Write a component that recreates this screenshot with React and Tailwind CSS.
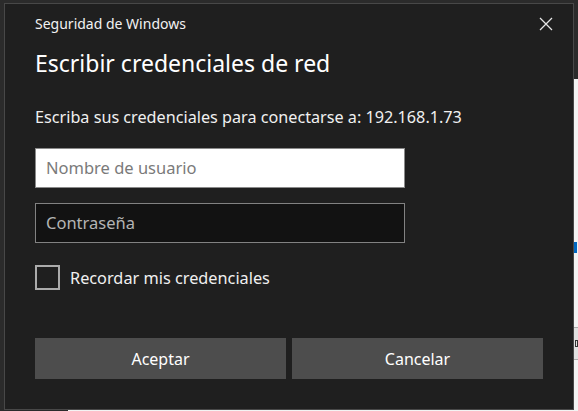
export default function App() {
  const font = { fontFamily: '"Segoe UI", "Noto Sans", "Open Sans", sans-serif' };
  return (
    <div
      className="relative w-[578px] h-[411px] overflow-hidden bg-[#2b2b2b]"
      style={font}
    >
      {/* underlying window behind the dialog */}
      <div className="absolute left-[68px] top-[79px] right-0 bottom-0 bg-[#f3f3f3]">
        <div className="absolute left-[506px] top-[163px] w-[3px] h-[11px] bg-[#0067c0]" />
        <div className="absolute left-[505px] top-[248px] w-[20px] h-[33px] border border-[#adadad] bg-[#e1e1e1]">
          <div className="mt-[12px] ml-[1px] w-[3px] h-[7px] border border-[#333]" />
        </div>
      </div>

      {/* dialog */}
      <div className="absolute left-[4px] top-[3px] w-[570px] h-[407px] border border-[#484848] bg-[#1f1f1f] text-white">
        <div className="relative flex flex-col pl-[30px] pr-[29px]">
          <div className="pt-[10px] h-[36px] text-[14px] leading-[20px] text-[#f2f2f2]">Seguridad de Windows</div>
          <svg
            className="absolute right-[20px] top-[13px]"
            width="14"
            height="14"
            viewBox="0 0 14 14"
          >
            <path d="M1 1 L13 13 M13 1 L1 13" stroke="#e6e6e6" strokeWidth="1.3" fill="none" />
          </svg>
          <div className="mt-[8px] text-[23px] leading-[30px] text-white">Escribir credenciales de red</div>
          <div className="mt-[29px] text-[16.2px] leading-[20px] text-[#f0f0f0]">
            Escriba sus credenciales para conectarse a: 192.168.1.73
          </div>
          <div className="mt-[21px] w-[370px] h-[40px] bg-white border border-[#8a8a8a] flex items-center pl-[10px] text-[16.5px] text-[#7a7a7a]">
            Nombre de usuario
          </div>
          <div className="mt-[15px] w-[370px] h-[40px] bg-[#121212] border border-[#828282] flex items-center pl-[10px] text-[16.5px] text-[#b4b4b4]">
            Contraseña
          </div>
          <div className="mt-[22px] flex items-center h-[25px]">
            <div className="w-[25px] h-[25px] border-2 border-[#ababab] bg-[#1f1f1f]" />
            <span className="ml-[10px] text-[16.3px] leading-[20px] text-[#f0f0f0]">Recordar mis credenciales</span>
          </div>
          <div className="mt-[48px] flex gap-[6px]">
            <div className="w-[251px] h-[41px] bg-[#4d4d4d] flex items-center justify-center text-[16px] text-white">
              Aceptar
            </div>
            <div className="w-[251px] h-[41px] bg-[#4d4d4d] flex items-center justify-center text-[16px] text-white">
              Cancelar
            </div>
          </div>
        </div>
      </div>
    </div>
  );
}
